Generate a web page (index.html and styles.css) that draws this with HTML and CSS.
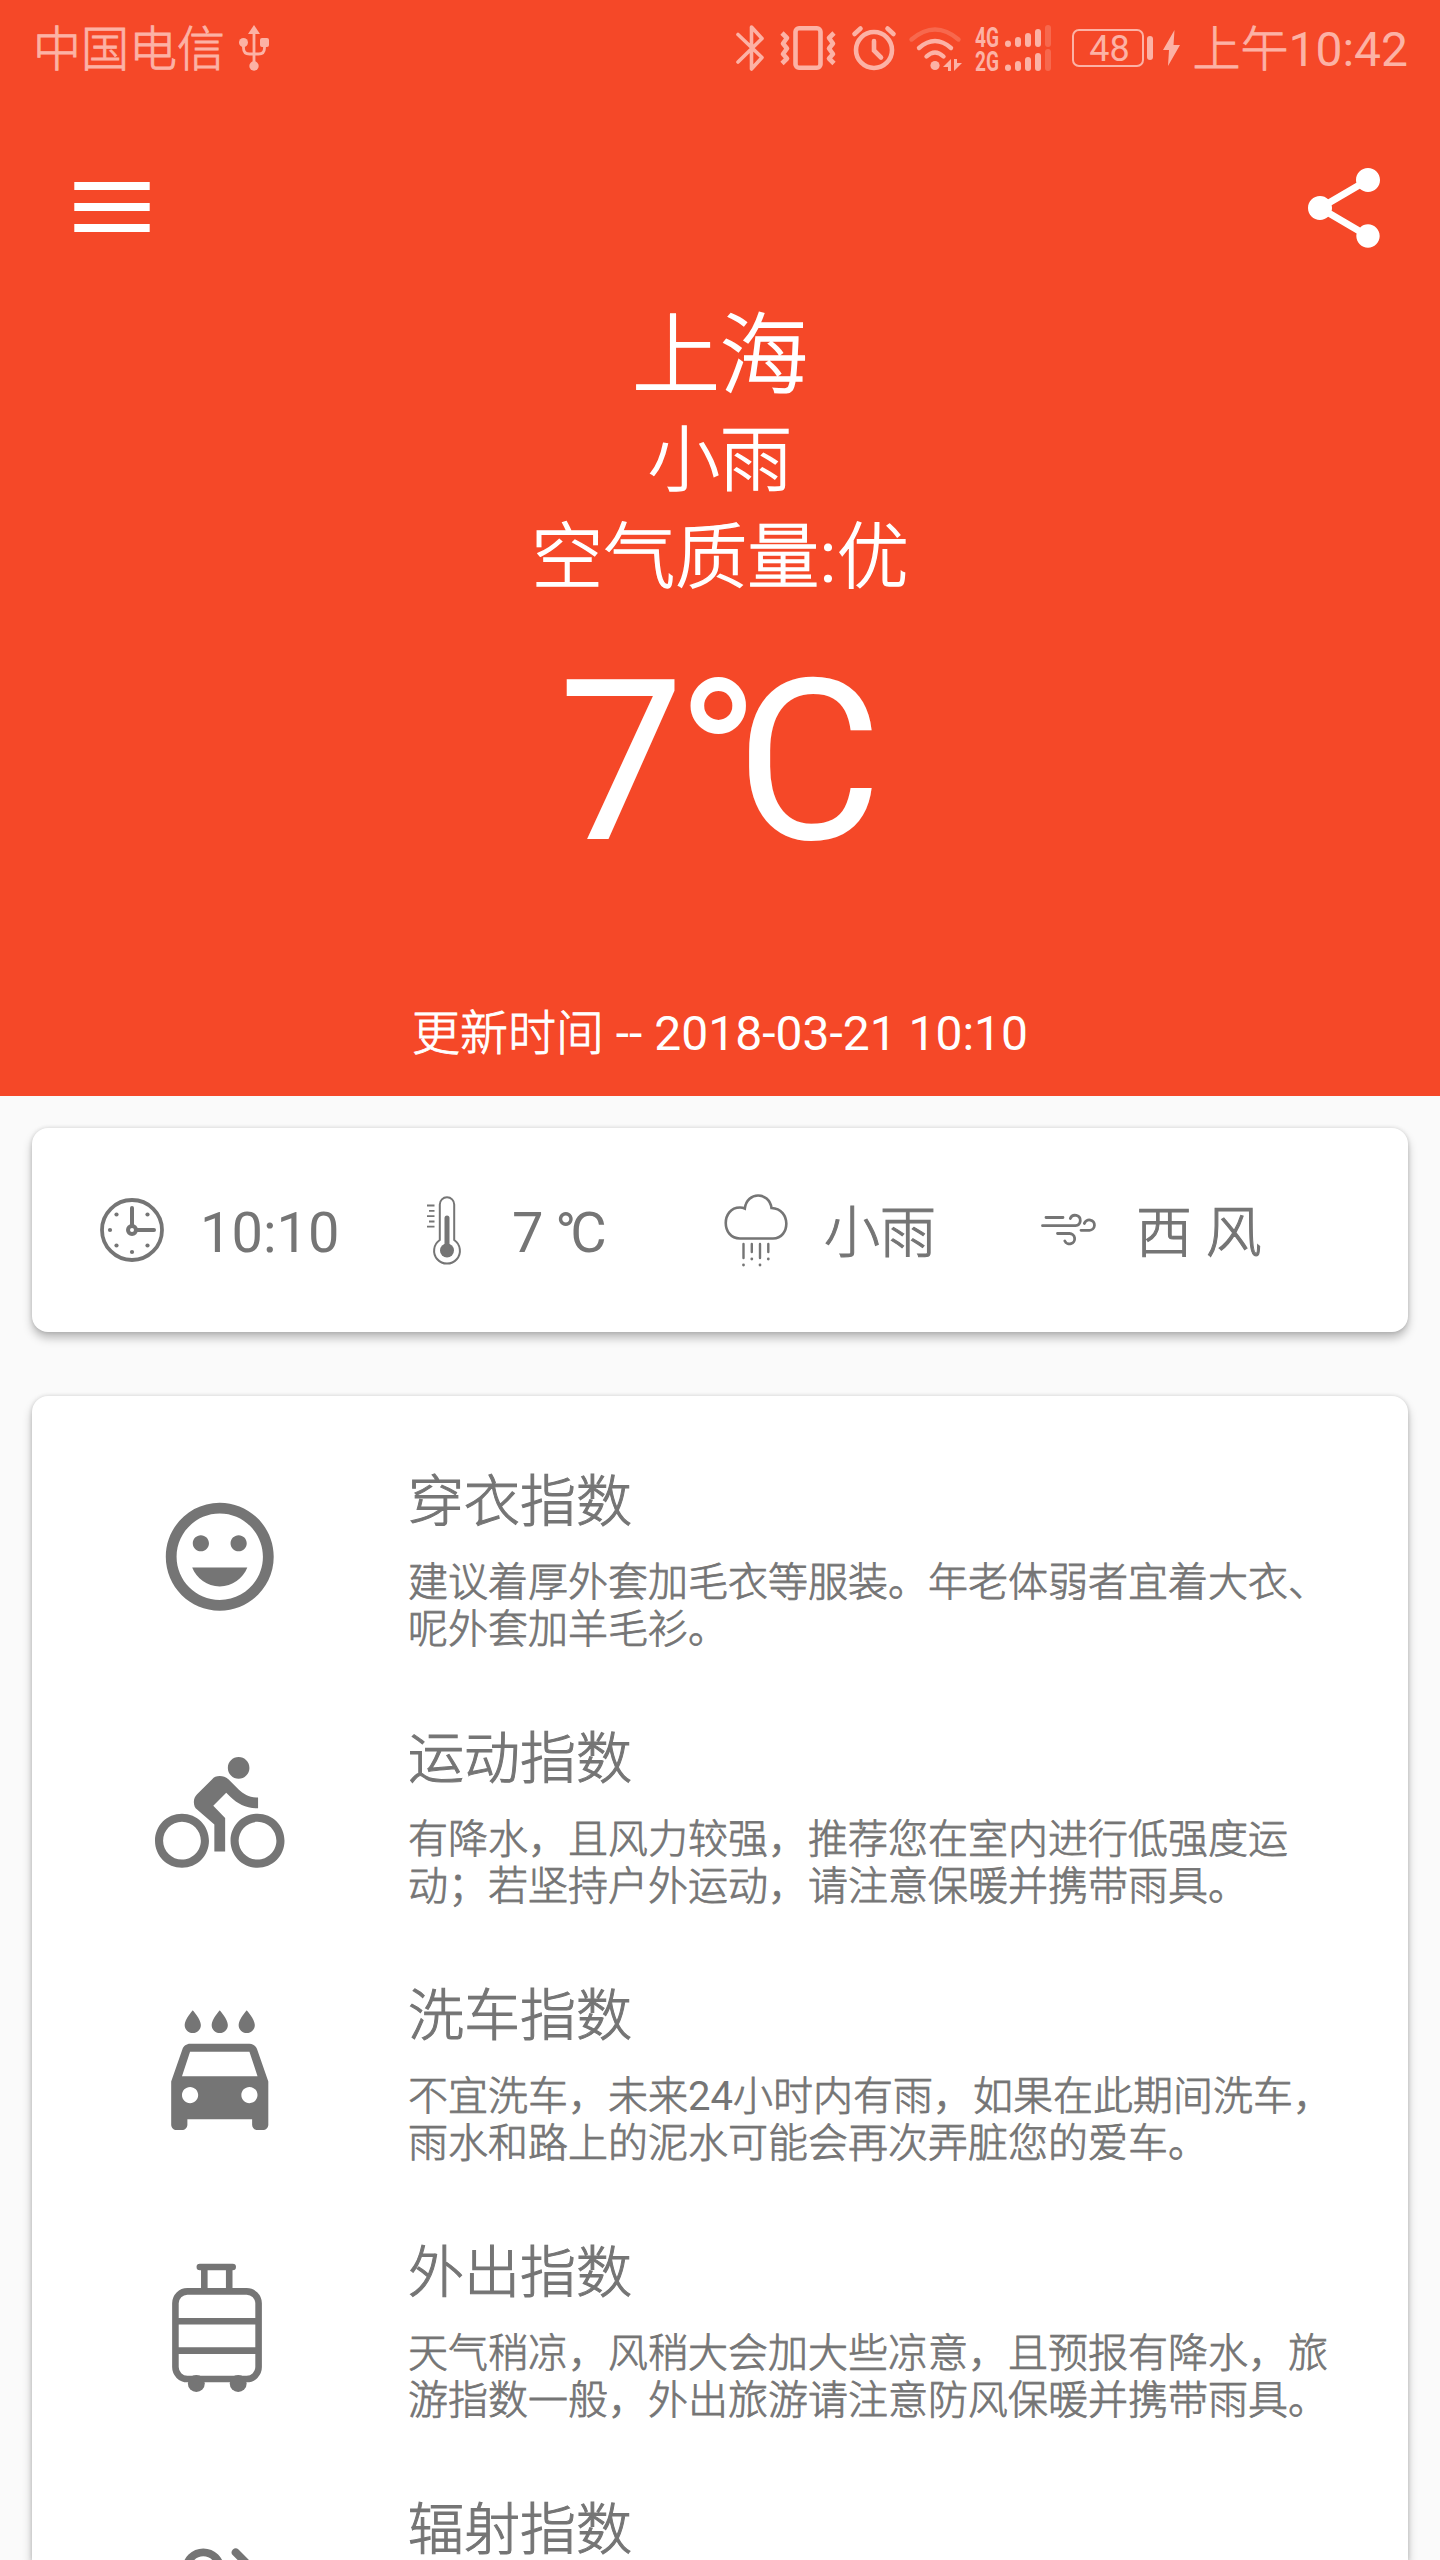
FILE: index.html
```html
<!DOCTYPE html>
<html lang="zh-CN">
<head>
<meta charset="utf-8">
<title>上海天气</title>
<link rel="stylesheet" href="styles.css">
</head>
<body>
<header class="hero">
  <div class="status">
    <span class="carrier">中国电信</span>
    <svg class="usb" width="30" height="46" viewBox="0 0 30 46" fill="currentColor"><path d="M15 0l6 9H9z"/><circle cx="4.500" cy="17.500" r="4.500"/><rect x="21" y="13" width="9" height="9" rx="2"/><circle cx="15" cy="41" r="4.700"/><path d="M15 6v34M4.500 19v4q0 6 6 6h9q6 0 6-6v-4" fill="none" stroke="currentColor" stroke-width="2.800"/></svg>
    <span class="spacer"></span>
    <svg class="bt" width="28" height="46" viewBox="0 0 28 46" fill="none" stroke="currentColor" stroke-width="3.600" stroke-linejoin="round" stroke-linecap="round"><path d="M2 9.500l24 23L15.500 44V2L26 13.500 2 37"/></svg>
    <svg class="vib" width="56" height="46" viewBox="0 0 56 46" fill="none" stroke="currentColor" stroke-width="4.600" stroke-linejoin="round"><rect x="15.500" y="3.300" width="25" height="39.400" rx="3.500"/><path d="M2 8l5 5-4 5.500 4 5-4 5.500 4 4.500-5 5M54 8l-5 5 4 5.500-4 5 4 5.500-4 4.500 5 5"/></svg>
    <svg class="alarm" width="44" height="46" viewBox="0 0 44 46" fill="none" stroke="currentColor" stroke-width="4.600" stroke-linecap="round"><circle cx="22" cy="25" r="18"/><path d="M22 16v9.500l7 7M2.500 9l6-5.500M41.500 9l-6-5.500" /></svg>
    <svg class="wifi" width="54" height="46" viewBox="0 0 54 46" fill="none" stroke="currentColor" stroke-width="4.400" stroke-linecap="round"><path d="M2.500 14.500q23.500-20 47 0" opacity=".3"/><path d="M10 23q16-14 32 0M17.500 31.500q8.500-8 17 0"/><circle cx="26" cy="40.500" r="4.600" fill="currentColor" stroke="none"/><path d="M42 34v12h-3v-4h-5zM45 34v12l8-8h-5v-4z" fill="currentColor" stroke="none"/></svg>
    <svg class="signal" width="77" height="46" viewBox="0 0 77 46" fill="currentColor"><g class="net"><text x="0" y="22" textLength="24" lengthAdjust="spacingAndGlyphs">4G</text><text x="0" y="46" textLength="24" lengthAdjust="spacingAndGlyphs">2G</text></g><g><rect x="30" y="15.500" width="6" height="6.500" rx="3"/><rect x="40" y="12" width="6" height="10" rx="3"/><rect x="50" y="8" width="6" height="14" rx="3"/><rect x="60" y="4" width="6" height="18" rx="3"/><rect x="70" y="0" width="6" height="22" rx="3" opacity=".3"/></g><g transform="translate(0 24)"><rect x="30" y="15.500" width="6" height="6.500" rx="3"/><rect x="40" y="12" width="6" height="10" rx="3"/><rect x="50" y="8" width="6" height="14" rx="3"/><rect x="60" y="4" width="6" height="18" rx="3"/><rect x="70" y="0" width="6" height="22" rx="3" opacity=".3"/></g></svg>
    <span class="battery">48</span><span class="nub"></span>
    <svg class="bolt" width="17" height="36" viewBox="0 0 17 36" fill="currentColor"><path d="M11.500 0L0 20h6L5 36 17 15h-6.500z"/></svg>
    <span class="clock">上午<b>10:42</b></span>
  </div>
  <div class="toolbar">
    <svg class="menu" width="76" height="50" viewBox="0 0 76 50" fill="#fff"><path d="M.3 0h75.400v8H.3zM.3 21h75.400v8H.3zM.3 42h75.400v8H.3z"/></svg>
    <svg width="96" height="96" viewBox="0 0 24 24" fill="#fff"><path d="M18 16.080c-.76 0-1.440.3-1.960.77L8.910 12.700c.05-.23.09-.46.09-.7s-.04-.47-.09-.7l7.050-4.110c.54.5 1.250.81 2.040.81 1.660 0 3-1.340 3-3s-1.340-3-3-3-3 1.340-3 3c0 .24.040.47.090.7L8.040 9.810C7.500 9.310 6.790 9 6 9c-1.660 0-3 1.340-3 3s1.340 3 3 3c.79 0 1.500-.31 2.040-.81l7.120 4.160c-.05.21-.08.43-.08.650 0 1.610 1.310 2.920 2.920 2.920 1.610 0 2.920-1.310 2.920-2.920s-1.310-2.920-2.920-2.920z"/></svg>
  </div>
  <div class="city">上海</div>
  <div class="cond">小雨</div>
  <div class="cond">空气质量<b>:</b>优</div>
  <div class="temp"><span class="num">7</span><span class="deg">°</span>C</div>
  <div class="updated">更新时间<b> -- 2018-03-21 10:10</b></div>
</header>
<main>
  <section class="card now">
    <div class="cell"><svg width="72" height="72" viewBox="0 0 72 72" fill="none" stroke="currentColor"><circle cx="36" cy="36" r="30" stroke-width="3.800"/><path d="M36 14v18M41 36h17" stroke-width="4" stroke-linecap="round"/><circle cx="36" cy="36" r="4" stroke-width="4"/><g fill="currentColor" stroke="none"><circle cx="36" cy="58" r="2.100"/><circle cx="14" cy="36" r="2.100"/><circle cx="20.500" cy="20.500" r="2.100"/><circle cx="51.500" cy="20.500" r="2.100"/><circle cx="20.500" cy="51.500" r="2.100"/><circle cx="51.500" cy="51.500" r="2.100"/></g></svg><b>10:10</b></div>
    <div class="cell"><svg width="72" height="72" viewBox="0 0 72 72" fill="none" stroke="currentColor"><path d="M31.800 46V10.500a7.200 7.200 0 0 1 14.400 0V46a12.900 12.900 0 1 1-14.400 0z" stroke-width="2"/><circle cx="39" cy="56.500" r="7" fill="currentColor" stroke="none"/><path d="M39 24v31" stroke-width="5" stroke-linecap="round"/><path d="M19 11.500h7.500M21 16.800h5.500M19 22.200h7.500M21 27.500h5.500M19 32.700h7.500" stroke-width="1.800"/></svg><b>7<span class="num"> </span><span class="deg">°</span>C</b></div>
    <div class="cell"><svg width="72" height="76" viewBox="0 0 72 76" fill="none" stroke="currentColor"><path d="M20 46.500C1 46.500 1 15.500 20 15.500q2.500 0 4.800 1C27-.8 49-.8 51.500 16 71.500 17 70.500 46.500 53 46.500z" stroke-width="2.600"/><path d="M23.500 52v14M31.800 52v8M40 52v14M48.300 52v8" stroke-width="2.400" stroke-linecap="round"/><g fill="currentColor" stroke="none"><circle cx="23.500" cy="73" r="1.400"/><circle cx="31.800" cy="67" r="1.400"/><circle cx="40" cy="73" r="1.400"/><circle cx="48.300" cy="67" r="1.400"/></g></svg><span class="han">小雨</span></div>
    <div class="cell"><svg width="72" height="72" viewBox="0 0 72 72" fill="none" stroke="currentColor" stroke-width="2.800" stroke-linecap="round"><path d="M14 23.500h17M10.500 31.700h33a5.200 5.200 0 1 0-5.200-7.200M49 36.300h8.500a5.200 5.200 0 1 0-5.200-6.800M25.500 39.500h12a5.200 5.200 0 1 1-4.700 7.500"/></svg><span class="han">西 风</span></div>
  </section>
  <section class="card list">
    <article class="item"><svg width="129.500" height="129.500" viewBox="0 0 24 24" fill="currentColor"><path d="M11.990 2C6.470 2 2 6.480 2 12s4.470 10 9.990 10C17.520 22 22 17.520 22 12S17.520 2 11.990 2zM12 20c-4.420 0-8-3.580-8-8s3.580-8 8-8 8 3.580 8 8-3.580 8-8 8zm3.500-9c.83 0 1.500-.67 1.500-1.500S16.330 8 15.500 8 14 8.670 14 9.500s.67 1.500 1.500 1.500zm-7 0c.83 0 1.500-.67 1.500-1.500S9.330 8 8.500 8 7 8.670 7 9.500 7.670 11 8.500 11zm3.500 6.500c2.330 0 4.310-1.460 5.110-3.500H6.890c.8 2.040 2.780 3.500 5.110 3.500z"/></svg><div><h2>穿衣指数</h2><p>建议着厚外套加毛衣等服装。年老体弱者宜着大衣、<br>呢外套加羊毛衫。</p></div></article>
    <article class="item"><svg width="129.500" height="129.500" viewBox="0 0 24 24" fill="currentColor"><path d="M15.500 5.500c1.100 0 2-.9 2-2s-.9-2-2-2-2 .9-2 2 .9 2 2 2zM5 12c-2.800 0-5 2.200-5 5s2.200 5 5 5 5-2.200 5-5-2.200-5-5-5zm0 8.500c-1.900 0-3.500-1.600-3.500-3.500s1.600-3.500 3.500-3.500 3.500 1.600 3.500 3.500-1.600 3.500-3.500 3.500zm5.800-10l2.400-2.400.8.800c1.300 1.300 3 2.100 5.100 2.100V9c-1.500 0-2.700-.6-3.600-1.500l-1.900-1.900c-.5-.4-1-.6-1.600-.6s-1.100.2-1.400.6L7.800 8.400c-.4.4-.6.9-.6 1.400 0 .6.200 1.100.6 1.400L11 14v5h2v-6.200l-2.200-2.300zM19 12c-2.800 0-5 2.200-5 5s2.200 5 5 5 5-2.200 5-5-2.200-5-5-5zm0 8.500c-1.900 0-3.500-1.600-3.500-3.500s1.600-3.500 3.500-3.500 3.500 1.600 3.500 3.500-1.600 3.500-3.500 3.500z"/></svg><div><h2>运动指数</h2><p>有降水，且风力较强，推荐您在室内进行低强度运<br>动；若坚持户外运动，请注意保暖并携带雨具。</p></div></article>
    <article class="item"><svg width="129.500" height="129.500" viewBox="0 0 24 24" fill="currentColor"><path d="M17 5c.83 0 1.500-.67 1.500-1.500 0-1-1.500-2.700-1.500-2.700s-1.500 1.700-1.500 2.700c0 .83.67 1.500 1.500 1.500zm-5 0c.83 0 1.500-.67 1.500-1.500 0-1-1.500-2.700-1.500-2.700s-1.500 1.700-1.500 2.700c0 .83.67 1.500 1.500 1.500zM7 5c.83 0 1.500-.67 1.500-1.500C8.500 2.500 7 .8 7 .8S5.500 2.500 5.500 3.500C5.500 4.330 6.170 5 7 5zm11.920 3.010C18.720 7.420 18.160 7 17.500 7h-11c-.66 0-1.210.42-1.420 1.010L3 14v8c0 .55.45 1 1 1h1c.55 0 1-.45 1-1v-1h12v1c0 .55.45 1 1 1h1c.55 0 1-.45 1-1v-8l-2.080-5.990zM6.500 18c-.83 0-1.500-.67-1.500-1.500S5.670 15 6.500 15s1.500.67 1.500 1.500S7.330 18 6.500 18zm11 0c-.83 0-1.500-.67-1.500-1.500s.67-1.500 1.500-1.500 1.500.67 1.500 1.500-.67 1.500-1.500 1.500zM5 13l1.500-4.500h11L19 13H5z"/></svg><div><h2>洗车指数</h2><p>不宜洗车，未来<b>24</b>小时内有雨，如果在此期间洗车，<br>雨水和路上的泥水可能会再次弄脏您的爱车。</p></div></article>
    <article class="item"><svg width="129.500" height="129.500" viewBox="0 0 130 130" fill="none" stroke="currentColor" stroke-width="6.600"><rect x="20.500" y="28.500" width="83.500" height="88" rx="12"/><path d="M21 58.500h83M21 88h83M49.500 28V5M74.500 28V5"/><path d="M45 4h33" stroke-linecap="round"/><g fill="currentColor" stroke="none"><circle cx="41.500" cy="121" r="8.500"/><circle cx="83.500" cy="121" r="8.500"/></g></svg><div><h2>外出指数</h2><p>天气稍凉，风稍大会加大些凉意，且预报有降水，旅<br>游指数一般，外出旅游请注意防风保暖并携带雨具。</p></div></article>
    <article class="item"><svg width="129.500" height="129.500" viewBox="0 0 130 130" fill="none" stroke="currentColor" stroke-width="8"><circle cx="48.500" cy="49.500" r="17"/><path d="M81 32.500l25 25" stroke-linecap="round"/></svg><div><h2>辐射指数</h2></div></article>
  </section>
</main>
</body>
</html>
```
FILE: styles.css
```css
* { box-sizing: border-box; }
body {
  margin: 0;
  width: 1440px;
  height: 2560px;
  display: flex;
  flex-direction: column;
  overflow: hidden;
  background: #fafafa;
  color: #757575;
  font-family: Roboto, "Noto Sans CJK SC", sans-serif;
  font-weight: 300;
}
/* Han glyphs sit between the light and regular weights */
.carrier, .clock, .city, .cond, .updated, .han, h2, p { -webkit-text-stroke: .019em currentColor; }
b { font-weight: 400; white-space: pre; -webkit-text-stroke: 0; }
svg { display: block; flex: none; overflow: visible; }

.hero {
  flex: none;
  height: 1096px;
  background: #f54828;
  color: #fff;
  text-align: center;
}
.status {
  height: 96px;
  padding: 0 32px;
  display: flex;
  align-items: center;
  color: #fcb2a5;
  font-size: 48px;
  line-height: 96px;
}
.carrier, .clock { padding-top: 3px; }
.carrier { margin-left: 1px; }
.usb { margin-left: 14px; }
.spacer { flex: 1; }
.vib { margin-left: 16px; }
.alarm { margin-left: 16px; }
.wifi { margin-left: 13px; }
.signal { margin-left: 12px; }
.net { font: 700 28px Roboto, sans-serif; }
.battery {
  width: 72px;
  height: 38px;
  margin-left: 20px;
  padding-left: 2px;
  border: 2px solid;
  border-radius: 7px;
  font: 400 36px/36px Roboto, sans-serif;
}
.nub { width: 6px; height: 24px; margin-left: 3px; border-radius: 3px; background: currentColor; }
.bolt { margin-left: 10px; }
.clock { margin-left: 12px; }

.toolbar {
  height: 224px;
  margin-bottom: -21px;
  padding: 64px 48px 0 74px;
  display: flex;
  justify-content: space-between;
}
.menu { margin-top: 22px; }
.city { font-size: 88px; line-height: 113px; }
.cond { font-size: 72px; line-height: 97px; }
.temp { margin-top: 26px; font-size: 224px; line-height: 262px; font-weight: 400; }
.num { letter-spacing: -.036em; }
.deg { letter-spacing: -.107em; }
.updated { margin-top: 110px; font-size: 48px; line-height: 60px; }

main { flex: 1; min-height: 0; padding: 32px 32px 0; overflow: hidden; display: flex; flex-direction: column; gap: 64px; }
.card {
  background: #fff;
  border-radius: 16px;
  box-shadow: 0 6px 10px rgba(0, 0, 0, .26), 0 0 4px rgba(0, 0, 0, .14);
}
.now {
  flex: none;
  height: 204px;
  padding: 0 64px;
  display: grid;
  grid-template-columns: repeat(4, 312px);
  font-size: 56px;
}
.cell { display: flex; align-items: center; gap: 32px; white-space: pre; }
.cell b, .han { padding-top: 5px; line-height: 66px; }
.list { flex: 1; min-height: 0; overflow: hidden; padding: 32px 0 0; border-radius: 16px 16px 0 0; }
.item {
  height: 257px;
  padding-left: 123px;
  display: flex;
  align-items: center;
  gap: 123.5px;
}
.item > div { align-self: flex-start; padding-top: 41px; }
h2 { margin: 0; font-size: 56px; line-height: 66px; font-weight: 300; }
p { margin: 24px 0 0; font-size: 40px; line-height: 47px; white-space: nowrap; }
```
